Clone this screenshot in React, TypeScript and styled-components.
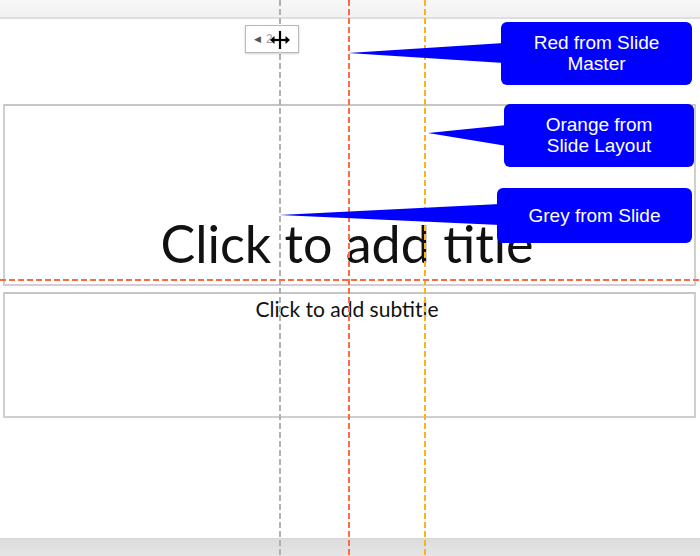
import React from 'react';
import styled, { createGlobalStyle } from 'styled-components';

const GlobalStyle = createGlobalStyle`
  html, body {
    margin: 0;
    padding: 0;
    background: #ffffff;
  }
  body {
    font-family: "Liberation Sans", Arial, sans-serif;
  }
`;

const Screen = styled.div`
  position: relative;
  width: 700px;
  height: 556px;
  display: flex;
  flex-direction: column;
  overflow: hidden;
  background: #ffffff;
`;

const TopBar = styled.div`
  height: 17px;
  background: linear-gradient(#f7f7f7, #f1f1f1);
  border-bottom: 2px solid #dedede;
`;

const Canvas = styled.div`
  flex: 1;
  display: flex;
  flex-direction: column;
  gap: 6px;
  padding: 85px 4px 0 3px;
  background: #ffffff;
`;

const BottomBar = styled.div`
  height: 17px;
  background: linear-gradient(#dcdcdc, #e6e6e6);
  border-top: 1px solid #d6d6d6;
`;

const Placeholder = styled.div<{ $height: number; $align: 'top' | 'bottom' }>`
  box-sizing: border-box;
  height: ${(p) => p.$height}px;
  border: 2px solid #cfcfcf;
  border-top-color: #c6c6c6;
  display: flex;
  justify-content: center;
  align-items: ${(p) => (p.$align === 'top' ? 'flex-start' : 'flex-end')};
  padding: ${(p) => (p.$align === 'top' ? '1px 0 0 0' : '0 0 10px 0')};
  color: #111111;
  font-family: Lato, "Open Sans", sans-serif;
`;

const TitleText = styled.div`
  font-size: 52px;
  line-height: 62px;
  margin-left: -5px;
`;

const SubtitleText = styled.div`
  font-size: 21px;
  line-height: 27px;
  margin-left: -5px;
`;

// guides sit over the slide like in the editor
const Guide = styled.div<{ $color: string; $x?: number; $y?: number }>`
  position: absolute;
  ${(p) =>
    p.$x !== undefined
      ? `
    left: ${p.$x}px;
    top: 0;
    bottom: 0;
    width: 2px;
    background: repeating-linear-gradient(to bottom, ${p.$color} 0 6px, transparent 6px 9px);
  `
      : `
    top: ${p.$y}px;
    left: 0;
    right: 0;
    height: 2px;
    background: repeating-linear-gradient(to right, ${p.$color} 0 6px, transparent 6px 9px);
  `}
`;

const Wedges = styled.svg`
  position: absolute;
  left: 0;
  top: 0;
  pointer-events: none;
`;

const Callout = styled.div<{ $x: number; $y: number; $w: number; $h: number }>`
  position: absolute;
  left: ${(p) => p.$x}px;
  top: ${(p) => p.$y}px;
  width: ${(p) => p.$w}px;
  height: ${(p) => p.$h}px;
  box-sizing: border-box;
  background: #0000ff;
  border-radius: 6px;
  display: flex;
  align-items: center;
  justify-content: center;
  text-align: center;
  color: #ffffff;
  font-family: "Liberation Sans", Arial, sans-serif;
  font-size: 19px;
  line-height: 21px;
  padding: 0 4px 1px 4px;
`;

const SpacingTip = styled.div`
  position: absolute;
  left: 245px;
  top: 25px;
  width: 54px;
  height: 28px;
  box-sizing: border-box;
  background: #ffffff;
  border: 1px solid #b9b9b9;
  box-shadow: 0 1px 2px rgba(0, 0, 0, 0.18);
  display: flex;
  align-items: center;
  padding-left: 8px;
  gap: 5px;
  color: #9a9a9a;
  font-family: "Liberation Sans", Arial, sans-serif;
  font-size: 12px;
`;

const TipArrow = styled.span`
  color: #555555;
  font-size: 9px;
`;

const Cursor = styled.svg`
  position: absolute;
  left: 269px;
  top: 29px;
`;

const callouts = [
  { x: 501, y: 22, w: 191, h: 63, lines: ['Red from Slide', 'Master'], tip: [348, 53], base: [43, 63] },
  { x: 504, y: 104, w: 190, h: 63, lines: ['Orange from', 'Slide Layout'], tip: [428, 133], base: [125, 146] },
  { x: 497, y: 188, w: 195, h: 55, lines: ['Grey from Slide'], tip: [279, 215], base: [204, 225] },
];

export default function App() {
  return (
    <Screen>
      <GlobalStyle />
      <TopBar />
      <Canvas>
        <Placeholder $height={182} $align="bottom">
          <TitleText>Click to add title</TitleText>
        </Placeholder>
        <Placeholder $height={126} $align="top">
          <SubtitleText>Click to add subtitle</SubtitleText>
        </Placeholder>
      </Canvas>
      <BottomBar />

      <Guide $color="#b0b0b0" $x={279} />
      <Guide $color="#ff6a45" $x={348} />
      <Guide $color="#ffb020" $x={424} />
      <Guide $color="#ff6a45" $y={279} />

      <Wedges width="700" height="556" viewBox="0 0 700 556">
        {callouts.map((c, i) => (
          <polygon
            key={i}
            fill="#0000ff"
            points={`${c.tip[0]},${c.tip[1]} ${c.x + 3},${c.base[0]} ${c.x + 3},${c.base[1]}`}
          />
        ))}
      </Wedges>

      {callouts.map((c, i) => (
        <Callout key={i} $x={c.x} $y={c.y} $w={c.w} $h={c.h}>
          <div>
            {c.lines.map((l) => (
              <div key={l}>{l}</div>
            ))}
          </div>
        </Callout>
      ))}

      <SpacingTip>
        <TipArrow>◀</TipArrow>
        <span>2</span>
      </SpacingTip>
      <Cursor width="22" height="22" viewBox="0 0 22 22">
        <path d="M11 1 L11 21" stroke="#ffffff" strokeWidth="4.5" />
        <path d="M2 11 L20 11" stroke="#ffffff" strokeWidth="4.5" />
        <path d="M11 2 L11 20" stroke="#000000" strokeWidth="2.2" />
        <path d="M3.5 11 L18.5 11" stroke="#000000" strokeWidth="2.2" />
        <path d="M1 11 L5.5 7 L5.5 15 Z" fill="#000000" />
        <path d="M21 11 L16.5 7 L16.5 15 Z" fill="#000000" />
      </Cursor>
    </Screen>
  );
}
